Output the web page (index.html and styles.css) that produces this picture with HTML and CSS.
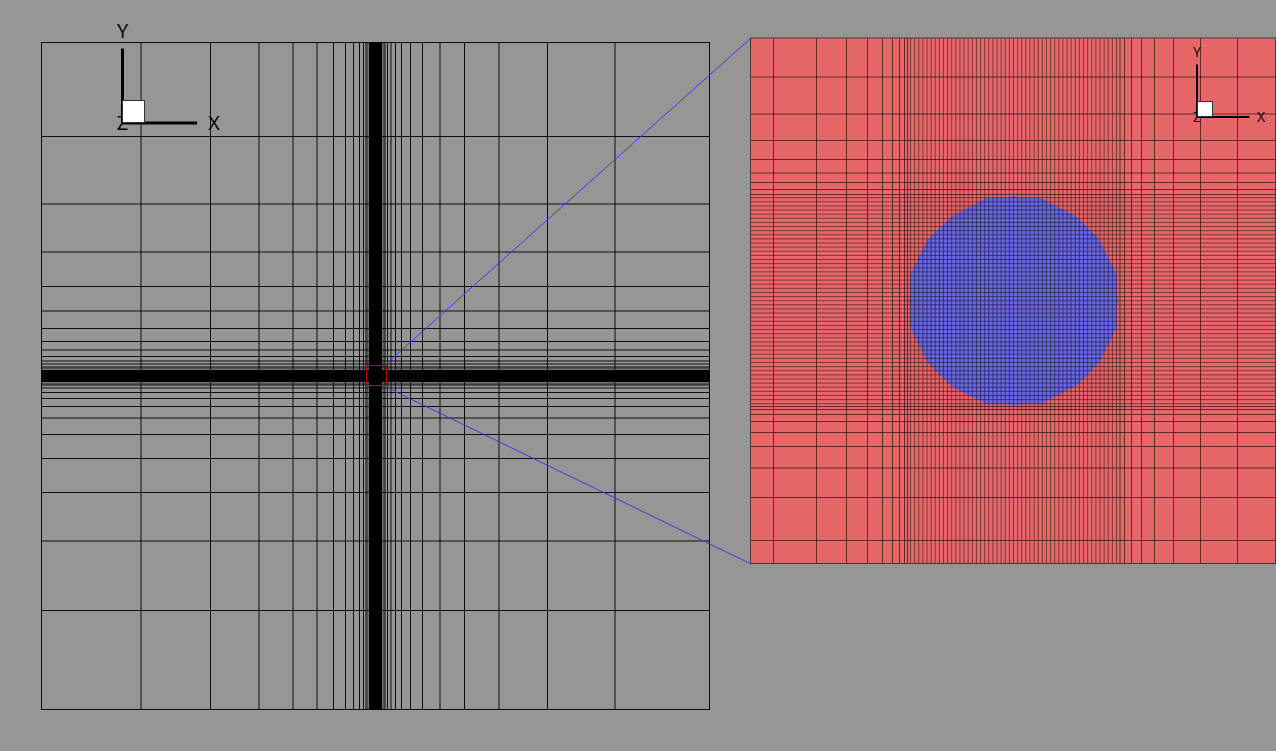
FILE: index.html
```html
<!DOCTYPE html>
<html lang="en">
<head>
<meta charset="utf-8">
<title>Mesh with refined centre</title>
<link rel="stylesheet" href="styles.css">
</head>
<body>
<main class="figure">
<svg class="canvas" viewBox="0 0 1276 751" role="img" aria-label="Computational mesh and enlarged centre region">
  <path id="mesh" class="mesh"/>
  <path class="band" d="M369 42H382V710H369ZM41 370H710V382H41Z"/>
  <path class="band-edge" d="M367.5 42V710M383.5 42V710M41 368.5H710M41 383.5H710"/>
  <path class="leader" d="M386 364L751 38M386 387L751 564"/>
  <rect class="focus" x="366.5" y="365.5" width="20" height="20"/>

  <rect class="zoom-area" x="751" y="38" width="525" height="526"/>
  <path class="cylinder" d="M986 198H1009L1013.5 195.5L1018 198H1041L1077 217L1099 239L1117 275V297L1119 301L1117 305V327L1099 363L1077 385L1041 404H1018L1013.5 405.5L1009 404H986L951 386L928 363L910 327V305L908.5 301L910 297V275L928 239L951 217Z"/>
  <path id="detail" class="detail"/>
  <path id="fine" class="detail fine"/>
  <rect class="zoom-edge" x="750.5" y="38" width="525" height="525.5"/>

  <g class="axes">
    <path class="axis" d="M122.5 48.5V123.5M122 123H197"/>
    <text class="label" x="122.5" y="38">Y</text>
    <text class="label" x="214" y="130">X</text>
    <text class="label" x="122.5" y="130">Z</text>
    <rect class="cube" x="122.5" y="100.5" width="22" height="22"/>
  </g>
  <g class="axes">
    <path class="axis small" d="M1197 64.5V117.5M1196 117H1249.5"/>
    <text class="label small-label" x="1197" y="57">Y</text>
    <text class="label small-label" x="1261" y="122">X</text>
    <text class="label small-label" x="1197" y="122">Z</text>
    <rect class="cube" x="1197.5" y="101.5" width="15" height="15"/>
  </g>
</svg>
</main>
<script src="mesh.js"></script>
</body>
</html>
```
FILE: styles.css
```css
body {
  margin: 0;
  background: #969696;
}

.figure {
  overflow: hidden;
}

.canvas {
  display: block;
  width: 100%;
  height: auto;
}

.mesh {
  fill: none;
  stroke: #000;
  stroke-opacity: 0.9;
}

.band {
  fill: #000;
}

.band-edge {
  fill: none;
  stroke: #000;
  stroke-opacity: 0.45;
  stroke-width: 2;
}

.leader {
  fill: none;
  stroke: #4238dc;
}

.focus {
  fill: none;
  stroke: #c00c10;
}

.zoom-area {
  fill: #e56767;
}

.cylinder {
  fill: #6868e0;
}

.detail {
  fill: none;
  stroke: #100000;
  stroke-opacity: 0.6;
}

.fine {
  stroke: #100010;
  stroke-opacity: 0.48;
}

.zoom-edge {
  fill: none;
  stroke: #4a3434;
}

.axis {
  fill: none;
  stroke: #000;
  stroke-width: 3;
}

.small {
  stroke-width: 2;
}

.label {
  font-family: "Open Sans", "Noto Sans", sans-serif;
  font-size: 20px;
  text-anchor: middle;
  fill: #000;
}

.small-label {
  font-size: 14px;
}

.cube {
  fill: #fff;
  stroke: #333;
}
```
FILE: mesh.js
```js
function gridPath(xs, ys, left, top, right, bottom) {
  return xs.map(x => `M${x} ${top}V${bottom}`).join("") +
    ys.map(y => `M${left} ${y}H${right}`).join("");
}

function uniform(centre) {
  return Array.from({ length: 51 }, (_, i) => centre + (i - 25) * 4.12);
}

document.getElementById("mesh").setAttribute("d", gridPath(
  [41.5, 141, 210.5, 259, 293, 317, 333.5, 345.5, 353.5, 359.5, 363.5, 366,
    385, 387.5, 391, 395.5, 401.5, 410.5, 422.5, 440, 464.5, 499, 547.5, 615, 709.5],
  [42.5, 136.5, 204, 252, 286.5, 311, 328.5, 341.5, 350, 356.5, 361, 364, 367,
    385, 388, 392.5, 398.5, 406.5, 418, 434.5, 458.5, 492.5, 541, 610.5, 709.5],
  41, 42, 710, 710));

document.getElementById("detail").setAttribute("d", gridPath(
  [773.5, 816.5, 846.5, 867.5, 882.5, 892.5, 899.5, 904.5, 907.5,
    1120, 1124.5, 1131.5, 1141.5, 1154.5, 1173.5, 1200.5, 1237.5],
  [77, 114, 140.5, 159.5, 173, 182.5, 189.5, 194.5,
    406.5, 409.5, 414.5, 421.5, 432.5, 446.5, 468, 497.5, 540.5],
  751, 38, 1276, 564));

document.getElementById("fine").setAttribute("d", gridPath(
  uniform(1013.5), uniform(300.7), 751, 38, 1276, 564));
```
